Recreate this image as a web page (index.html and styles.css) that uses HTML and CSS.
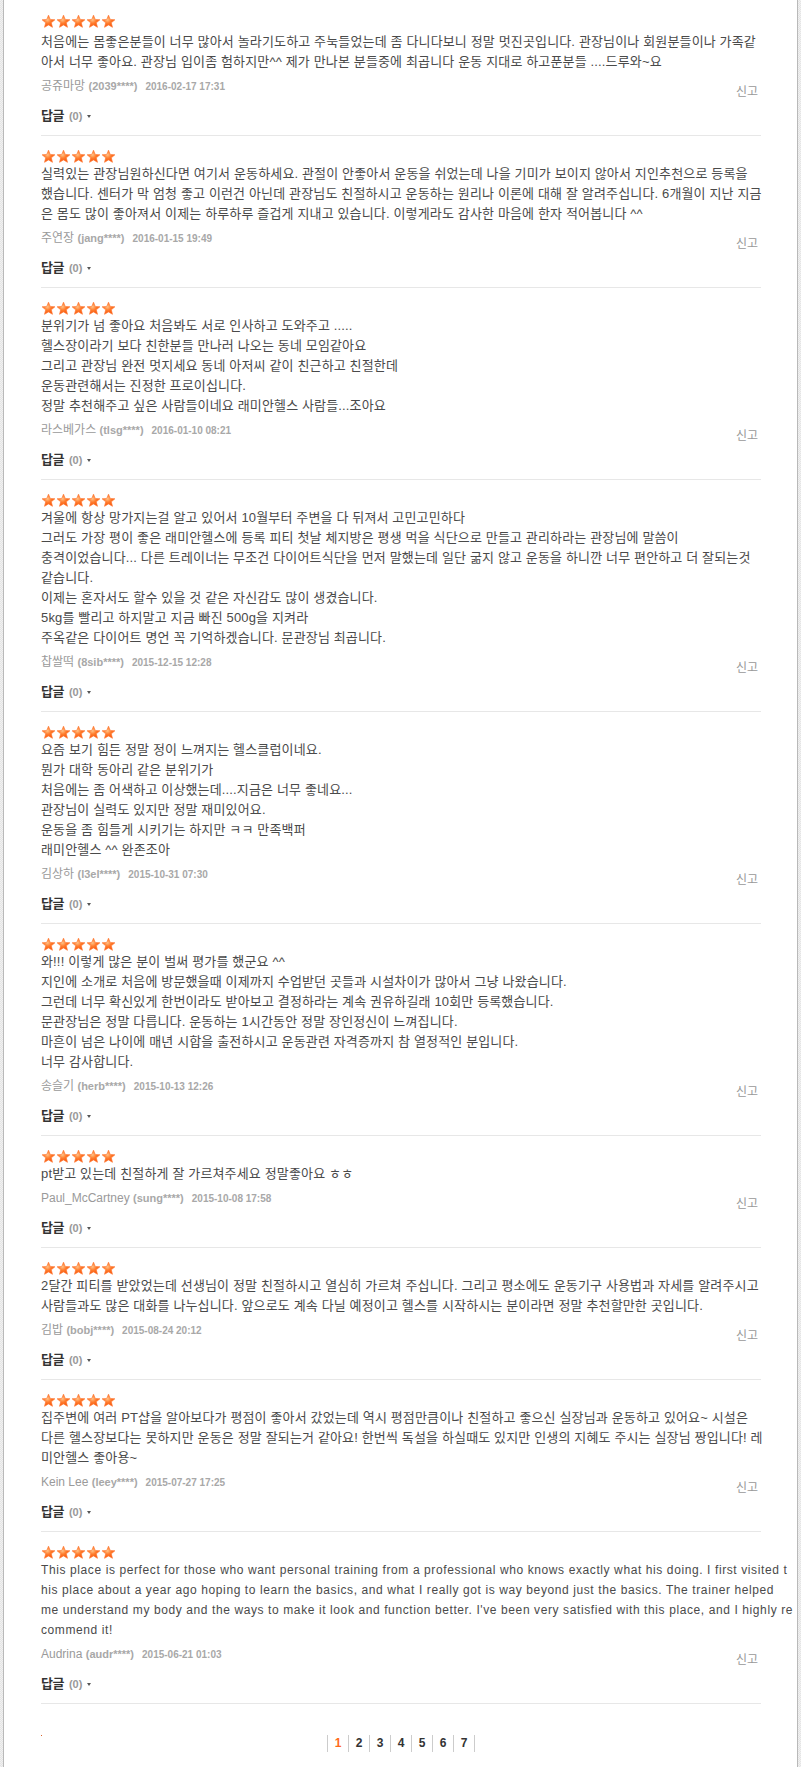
FILE: index.html
```html
<!DOCTYPE html>
<html lang="ko">
<head>
<meta charset="utf-8">
<title>후기</title>
<link rel="stylesheet" href="styles.css">
</head>
<body>
<svg class="defs" width="0" height="0" aria-hidden="true">
  <defs>
    <radialGradient id="starFill" cx="0.42" cy="0.38" r="0.7">
      <stop offset="0" stop-color="#ffc48a"/>
      <stop offset="0.4" stop-color="#ff7d2e"/>
      <stop offset="1" stop-color="#f54800"/>
    </radialGradient>
    <symbol id="star" viewBox="0 0 16 16">
      <path d="M8 1.2 L9.88 5.81 L14.85 6.18 L11.04 9.39 L12.23 14.23 L8 11.6 L3.77 14.23 L4.96 9.39 L1.15 6.18 L6.12 5.81 Z" fill="url(#starFill)" stroke="#ff7a36" stroke-width="0.7" stroke-linejoin="round"/>
    </symbol>
  </defs>
</svg>
<div class="frame">
  <div class="board">
    <ul class="reviews">
      <li class="review">
        <div class="stars"><svg><use href="#star"/></svg><svg><use href="#star"/></svg><svg><use href="#star"/></svg><svg><use href="#star"/></svg><svg><use href="#star"/></svg></div>
        <p class="text">처음에는 몸좋은분들이 너무 많아서 놀라기도하고 주눅들었는데 좀 다니다보니 정말 멋진곳입니다. 관장님이나 회원분들이나 가족같<br>아서 너무 좋아요. 관장님 입이좀 험하지만^^ 제가 만나본 분들중에 최곱니다 운동 지대로 하고푼분들 ....드루와~요</p>
        <div class="meta"><span class="author"><span class="name">공쥬마망</span> <span class="uid">(2039****)</span><span class="date">2016-02-17 17:31</span></span><span class="report">신고</span></div>
        <div class="reply"><b class="reply-label">답글</b><span class="count">(0)</span><span class="caret"></span></div>
      </li>
      <li class="review">
        <div class="stars"><svg><use href="#star"/></svg><svg><use href="#star"/></svg><svg><use href="#star"/></svg><svg><use href="#star"/></svg><svg><use href="#star"/></svg></div>
        <p class="text">실력있는 관장님원하신다면 여기서 운동하세요. 관절이 안좋아서 운동을 쉬었는데 나을 기미가 보이지 않아서 지인추천으로 등록을 <br>했습니다. 센터가 막 엄청 좋고 이런건 아닌데 관장님도 친절하시고 운동하는 원리나 이론에 대해 잘 알려주십니다. 6개월이 지난 지금<br>은 몸도 많이 좋아져서 이제는 하루하루 즐겁게 지내고 있습니다. 이렇게라도 감사한 마음에 한자 적어봅니다 ^^</p>
        <div class="meta"><span class="author"><span class="name">주연장</span> <span class="uid">(jang****)</span><span class="date">2016-01-15 19:49</span></span><span class="report">신고</span></div>
        <div class="reply"><b class="reply-label">답글</b><span class="count">(0)</span><span class="caret"></span></div>
      </li>
      <li class="review">
        <div class="stars"><svg><use href="#star"/></svg><svg><use href="#star"/></svg><svg><use href="#star"/></svg><svg><use href="#star"/></svg><svg><use href="#star"/></svg></div>
        <p class="text">분위기가 넘 좋아요 처음봐도 서로 인사하고 도와주고 .....<br>헬스장이라기 보다 친한분들 만나러 나오는 동네 모임같아요<br>그리고 관장님 완전 멋지세요 동네 아저씨 같이 친근하고 친절한데<br>운동관련해서는 진정한 프로이십니다.<br>정말 추천해주고 싶은 사람들이네요 래미안헬스 사람들...조아요</p>
        <div class="meta"><span class="author"><span class="name">라스베가스</span> <span class="uid">(tlsg****)</span><span class="date">2016-01-10 08:21</span></span><span class="report">신고</span></div>
        <div class="reply"><b class="reply-label">답글</b><span class="count">(0)</span><span class="caret"></span></div>
      </li>
      <li class="review">
        <div class="stars"><svg><use href="#star"/></svg><svg><use href="#star"/></svg><svg><use href="#star"/></svg><svg><use href="#star"/></svg><svg><use href="#star"/></svg></div>
        <p class="text">겨울에 항상 망가지는걸 알고 있어서 10월부터 주변을 다 뒤져서 고민고민하다<br>그러도 가장 평이 좋은 래미안헬스에 등록 피티 첫날 체지방은 평생 먹을 식단으로 만들고 관리하라는 관장님에 말씀이<br>충격이었습니다... 다른 트레이너는 무조건 다이어트식단을 먼저 말했는데 일단 굶지 않고 운동을 하니깐 너무 편안하고 더 잘되는것 <br>같습니다.<br>이제는 혼자서도 할수 있을 것 같은 자신감도 많이 생겼습니다.<br>5kg를 빨리고 하지말고 지금 빠진 500g을 지켜라<br>주옥같은 다이어트 명언 꼭 기억하겠습니다. 문관장님 최곱니다.</p>
        <div class="meta"><span class="author"><span class="name">찹쌀떡</span> <span class="uid">(8sib****)</span><span class="date">2015-12-15 12:28</span></span><span class="report">신고</span></div>
        <div class="reply"><b class="reply-label">답글</b><span class="count">(0)</span><span class="caret"></span></div>
      </li>
      <li class="review">
        <div class="stars"><svg><use href="#star"/></svg><svg><use href="#star"/></svg><svg><use href="#star"/></svg><svg><use href="#star"/></svg><svg><use href="#star"/></svg></div>
        <p class="text">요즘 보기 힘든 정말 정이 느껴지는 헬스클럽이네요.<br>뭔가 대학 동아리 같은 분위기가<br>처음에는 좀 어색하고 이상했는데....지금은 너무 좋네요...<br>관장님이 실력도 있지만 정말 재미있어요.<br>운동을 좀 힘들게 시키기는 하지만 ㅋㅋ 만족백퍼<br>래미안헬스 ^^ 완존조아</p>
        <div class="meta"><span class="author"><span class="name">김상하</span> <span class="uid">(l3el****)</span><span class="date">2015-10-31 07:30</span></span><span class="report">신고</span></div>
        <div class="reply"><b class="reply-label">답글</b><span class="count">(0)</span><span class="caret"></span></div>
      </li>
      <li class="review">
        <div class="stars"><svg><use href="#star"/></svg><svg><use href="#star"/></svg><svg><use href="#star"/></svg><svg><use href="#star"/></svg><svg><use href="#star"/></svg></div>
        <p class="text">와!!! 이렇게 많은 분이 벌써 평가를 했군요 ^^<br>지인에 소개로 처음에 방문했을때 이제까지 수업받던 곳들과 시설차이가 많아서 그냥 나왔습니다.<br>그런데 너무 확신있게 한번이라도 받아보고 결정하라는 계속 권유하길래 10회만 등록했습니다.<br>문관장님은 정말 다릅니다. 운동하는 1시간동안 정말 장인정신이 느껴집니다.<br>마흔이 넘은 나이에 매년 시합을 출전하시고 운동관련 자격증까지 참 열정적인 분입니다.<br>너무 감사합니다.</p>
        <div class="meta"><span class="author"><span class="name">송슬기</span> <span class="uid">(herb****)</span><span class="date">2015-10-13 12:26</span></span><span class="report">신고</span></div>
        <div class="reply"><b class="reply-label">답글</b><span class="count">(0)</span><span class="caret"></span></div>
      </li>
      <li class="review">
        <div class="stars"><svg><use href="#star"/></svg><svg><use href="#star"/></svg><svg><use href="#star"/></svg><svg><use href="#star"/></svg><svg><use href="#star"/></svg></div>
        <p class="text">pt받고 있는데 친절하게 잘 가르쳐주세요 정말좋아요 ㅎㅎ</p>
        <div class="meta"><span class="author"><span class="name">Paul_McCartney</span> <span class="uid">(sung****)</span><span class="date">2015-10-08 17:58</span></span><span class="report">신고</span></div>
        <div class="reply"><b class="reply-label">답글</b><span class="count">(0)</span><span class="caret"></span></div>
      </li>
      <li class="review">
        <div class="stars"><svg><use href="#star"/></svg><svg><use href="#star"/></svg><svg><use href="#star"/></svg><svg><use href="#star"/></svg><svg><use href="#star"/></svg></div>
        <p class="text">2달간 피티를 받았었는데 선생님이 정말 친절하시고 열심히 가르쳐 주십니다. 그리고 평소에도 운동기구 사용법과 자세를 알려주시고 <br>사람들과도 많은 대화를 나누십니다. 앞으로도 계속 다닐 예정이고 헬스를 시작하시는 분이라면 정말 추천할만한 곳입니다.</p>
        <div class="meta"><span class="author"><span class="name">김밥</span> <span class="uid">(bobj****)</span><span class="date">2015-08-24 20:12</span></span><span class="report">신고</span></div>
        <div class="reply"><b class="reply-label">답글</b><span class="count">(0)</span><span class="caret"></span></div>
      </li>
      <li class="review">
        <div class="stars"><svg><use href="#star"/></svg><svg><use href="#star"/></svg><svg><use href="#star"/></svg><svg><use href="#star"/></svg><svg><use href="#star"/></svg></div>
        <p class="text">집주변에 여러 PT샵을 알아보다가 평점이 좋아서 갔었는데 역시 평점만큼이나 친절하고 좋으신 실장님과 운동하고 있어요~ 시설은 <br>다른 헬스장보다는 못하지만 운동은 정말 잘되는거 같아요! 한번씩 독설을 하실때도 있지만 인생의 지혜도 주시는 실장님 짱입니다! 레<br>미안헬스 좋아용~</p>
        <div class="meta"><span class="author"><span class="name">Kein Lee</span> <span class="uid">(leey****)</span><span class="date">2015-07-27 17:25</span></span><span class="report">신고</span></div>
        <div class="reply"><b class="reply-label">답글</b><span class="count">(0)</span><span class="caret"></span></div>
      </li>
      <li class="review">
        <div class="stars"><svg><use href="#star"/></svg><svg><use href="#star"/></svg><svg><use href="#star"/></svg><svg><use href="#star"/></svg><svg><use href="#star"/></svg></div>
        <p class="text text-en">This place is perfect for those who want personal training from a professional who knows exactly what his doing. I first visited t<br>his place about a year ago hoping to learn the basics, and what I really got is way beyond just the basics. The trainer helped <br>me understand my body and the ways to make it look and function better. I've been very satisfied with this place, and I highly re<br>commend it!</p>
        <div class="meta"><span class="author"><span class="name">Audrina</span> <span class="uid">(audr****)</span><span class="date">2015-06-21 01:03</span></span><span class="report">신고</span></div>
        <div class="reply"><b class="reply-label">답글</b><span class="count">(0)</span><span class="caret"></span></div>
      </li>
    </ul>
    <div class="paging">
      <span class="paging-dot"></span>
      <div class="pages">
        <a class="page current">1</a><a class="page">2</a><a class="page">3</a><a class="page">4</a><a class="page">5</a><a class="page">6</a><a class="page">7</a>
      </div>
      <span></span>
    </div>
  </div>
</div>
</body>
</html>
```

FILE: styles.css
```css
html, body {
  margin: 0;
  padding: 0;
  background: #fff;
}

body {
  font-family: "Liberation Sans", "Noto Sans CJK KR", sans-serif;
  font-size: 12px;
  color: #555;
}

.defs {
  display: block;
  width: 0;
  height: 0;
  overflow: hidden;
}

.frame {
  padding: 0 3px;
  min-height: 1767px;
  box-sizing: border-box;
  background-color: #f1f1f1;
  background-image:
    linear-gradient(45deg, #e4e4e4 25%, transparent 25%, transparent 75%, #e4e4e4 75%),
    linear-gradient(45deg, #e4e4e4 25%, transparent 25%, transparent 75%, #e4e4e4 75%);
  background-size: 2px 2px;
  background-position: 0 0, 1px 1px;
  display: flex;
}

.board {
  flex: 1;
  min-width: 0;
  background: #fff;
  border-left: 1px solid #b9b9b9;
  border-right: 1px solid #b9b9b9;
  padding: 1px 36px 15px 37px;
}

.reviews {
  list-style: none;
  margin: 0;
  padding: 0;
}

.review {
  padding: 13px 0 9px;
  border-bottom: 1px solid #e7e7e7;
}

.stars {
  display: flex;
  height: 15px;
}

.review:first-child .stars {
  margin-bottom: 3px;
}

.stars svg {
  width: 15px;
  height: 15px;
  display: block;
}

.text {
  margin: 0;
  font-size: 13px;
  line-height: 20px;
  letter-spacing: 0.15px;
  color: #4a4a4a;
  white-space: nowrap;
}

.text-en {
  font-size: 12px;
  letter-spacing: 0.6px;
}

.meta {
  margin-top: 4px;
  display: flex;
  justify-content: space-between;
  align-items: flex-start;
}

.author {
  line-height: 20px;
  color: #9a9a9a;
  white-space: nowrap;
}

.name {
  font-size: 12px;
}

.uid {
  font-size: 11px;
  font-weight: bold;
  color: #a8a8a8;
}

.date {
  margin-left: 8px;
  font-size: 10px;
  font-weight: bold;
  color: #a8a8a8;
}

.report {
  margin-top: 6px;
  margin-right: 3px;
  line-height: 20px;
  color: #999;
  font-size: 12px;
}

.reply {
  margin-top: 4px;
  line-height: 20px;
  display: flex;
  align-items: center;
}

.reply-label {
  font-size: 13px;
  letter-spacing: -0.5px;
  color: #333;
}

.count {
  margin-left: 5px;
  font-size: 11px;
  font-weight: bold;
  color: #999;
}

.caret {
  margin-left: 5px;
  width: 0;
  height: 0;
  border-left: 2.5px solid transparent;
  border-right: 2.5px solid transparent;
  border-top: 3px solid #555;
}

.paging {
  margin-top: 31px;
  display: grid;
  grid-template-columns: 1fr auto 1fr;
}

.paging-dot {
  justify-self: start;
  align-self: start;
  width: 1px;
  height: 1px;
  background: #d9622a;
}

.pages {
  display: flex;
  border-right: 1px solid #ccc;
}

.page {
  width: 20px;
  height: 17px;
  line-height: 17px;
  border-left: 1px solid #ccc;
  text-align: center;
  font-size: 12px;
  font-weight: bold;
  color: #333;
}

.page.current {
  color: #ff6a1a;
}
```
